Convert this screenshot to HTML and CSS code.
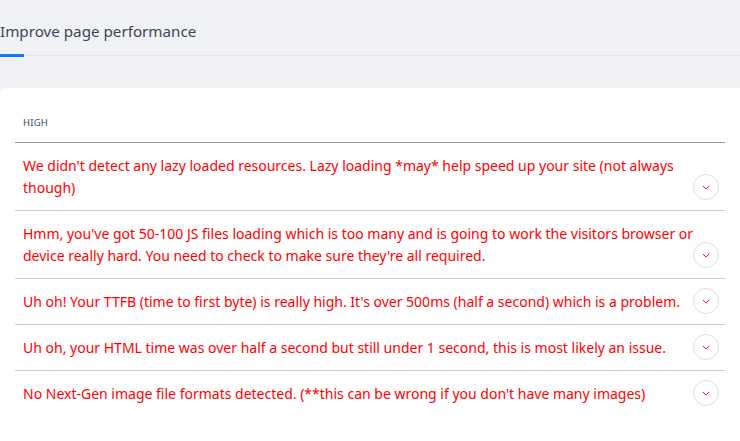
FILE: index.html
```html
<!DOCTYPE html>
<html lang="en">
<head>
<meta charset="utf-8">
<title>Improve page performance</title>
<link rel="stylesheet" href="styles.css">
</head>
<body>
<nav class="tabs">
  <div class="tab active">Improve page performance</div>
</nav>
<section class="card">
  <div class="group-head">HIGH</div>
  <ul class="issues">
    <li class="issue"><p class="msg">We didn't detect any lazy loaded resources. Lazy loading *may* help speed up your site (not always though)<button class="toggle" aria-label="Expand"><svg viewBox="0 0 10 6" width="8" height="5"><path d="M1 1l4 4 4-4" fill="none" stroke="currentColor" stroke-width="1.2"/></svg></button></p></li>
    <li class="issue"><p class="msg">Hmm, you've got 50-100 JS files loading which is too many and is going to work the visitors browser or device really hard. You need to check to make sure they're all required.<button class="toggle" aria-label="Expand"><svg viewBox="0 0 10 6" width="8" height="5"><path d="M1 1l4 4 4-4" fill="none" stroke="currentColor" stroke-width="1.2"/></svg></button></p></li>
    <li class="issue"><p class="msg">Uh oh! Your TTFB (time to first byte) is really high. It's over 500ms (half a second) which is a problem.<button class="toggle" aria-label="Expand"><svg viewBox="0 0 10 6" width="8" height="5"><path d="M1 1l4 4 4-4" fill="none" stroke="currentColor" stroke-width="1.2"/></svg></button></p></li>
    <li class="issue"><p class="msg">Uh oh, your HTML time was over half a second but still under 1 second, this is most likely an issue.<button class="toggle" aria-label="Expand"><svg viewBox="0 0 10 6" width="8" height="5"><path d="M1 1l4 4 4-4" fill="none" stroke="currentColor" stroke-width="1.2"/></svg></button></p></li>
    <li class="issue"><p class="msg">No Next-Gen image file formats detected. (**this can be wrong if you don't have many images)<button class="toggle" aria-label="Expand"><svg viewBox="0 0 10 6" width="8" height="5"><path d="M1 1l4 4 4-4" fill="none" stroke="currentColor" stroke-width="1.2"/></svg></button></p></li>
  </ul>
</section>
</body>
</html>
```

FILE: styles.css
```css
* { box-sizing: border-box; }
html, body { margin: 0; padding: 0; }
body {
  background: #f1f2f6;
  font-family: "Noto Sans", "Open Sans", Arial, sans-serif;
  color: #3d4556;
  overflow: hidden;
}
.tabs {
  display: flex;
  height: 56px;
  border-bottom: 1px solid #e3e5ea;
}
.tab {
  position: relative;
  font-size: 15.2px;
  line-height: 22px;
  padding-top: 20px;
  color: #3d4556;
}
.tab.active::after {
  content: "";
  position: absolute;
  left: 0;
  top: 54px;
  width: 24px;
  height: 3px;
  background: #0a7cff;
}
.card {
  margin-top: 32px;
  background: #fff;
  border-radius: 6px 0 0 0;
  padding: 0 15px;
  height: 353px;
}
.group-head {
  font-size: 9.5px;
  line-height: 12px;
  letter-spacing: 0.2px;
  color: #3d4a5c;
  padding: 29px 8px 13px;
  border-bottom: 1px solid #999;
}
.issues {
  list-style: none;
  margin: 0;
  padding: 0;
}
.issue {
  padding: 12px 6px 11px 8px;
  border-bottom: 1px solid #c9cedb;
}
.issue:last-child { border-bottom: 0; }
.msg {
  margin: 0;
  font-size: 14px;
  line-height: 22px;
  color: #ff0000;
}
.toggle {
  float: right;
  width: 26px;
  height: 26px;
  margin: -3px 0 -1px;
  padding: 0;
  border: 1px solid #dedede;
  border-radius: 50%;
  background: #fff;
  color: #ff0000;
  display: flex;
  align-items: center;
  justify-content: center;
}
.toggle svg { display: block; }
```
